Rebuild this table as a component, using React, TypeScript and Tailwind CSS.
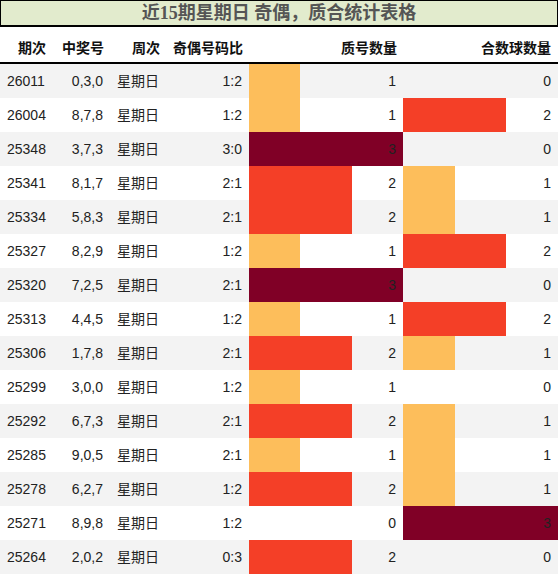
type Row = {
  issue: string;
  nums: string;
  ratio: string;
  prime: number;
  comp: number;
};

const rows: Row[] = [
  { issue: "26011", nums: "0,3,0", ratio: "1:2", prime: 1, comp: 0 },
  { issue: "26004", nums: "8,7,8", ratio: "1:2", prime: 1, comp: 2 },
  { issue: "25348", nums: "3,7,3", ratio: "3:0", prime: 3, comp: 0 },
  { issue: "25341", nums: "8,1,7", ratio: "2:1", prime: 2, comp: 1 },
  { issue: "25334", nums: "5,8,3", ratio: "2:1", prime: 2, comp: 1 },
  { issue: "25327", nums: "8,2,9", ratio: "1:2", prime: 1, comp: 2 },
  { issue: "25320", nums: "7,2,5", ratio: "2:1", prime: 3, comp: 0 },
  { issue: "25313", nums: "4,4,5", ratio: "1:2", prime: 1, comp: 2 },
  { issue: "25306", nums: "1,7,8", ratio: "2:1", prime: 2, comp: 1 },
  { issue: "25299", nums: "3,0,0", ratio: "1:2", prime: 1, comp: 0 },
  { issue: "25292", nums: "6,7,3", ratio: "2:1", prime: 2, comp: 1 },
  { issue: "25285", nums: "9,0,5", ratio: "2:1", prime: 1, comp: 1 },
  { issue: "25278", nums: "6,2,7", ratio: "1:2", prime: 2, comp: 1 },
  { issue: "25271", nums: "8,9,8", ratio: "1:2", prime: 0, comp: 3 },
  { issue: "25264", nums: "2,0,2", ratio: "0:3", prime: 2, comp: 0 },
];

const barColor = ["transparent", "#fdbe5b", "#f43f27", "#800026"];

const cols = "grid grid-cols-[53px_57px_56px_83px_154px_155px]";

function BarCell({ value }: { value: number }) {
  return (
    <div className="relative flex items-center justify-end pr-[7px]">
      {value > 0 && (
        <div
          className="absolute left-0 top-0 bottom-0"
          style={{ width: `${(value / 3) * 100}%`, background: barColor[value] }}
        />
      )}
      <span className="relative">{value}</span>
    </div>
  );
}

export default function App() {
  return (
    <div
      className="w-[558px] h-[575px] overflow-hidden bg-white text-[14px] text-[#222]"
      style={{ fontFamily: '"Liberation Sans", "Noto Sans CJK SC", sans-serif' }}
    >
      <div
        className="h-[27px] border border-b-2 border-black bg-[#e2ebcd] flex items-center justify-center text-[18px] font-bold text-[#555] leading-none"
        style={{ fontFamily: '"Liberation Serif", "Noto Sans CJK SC", serif' }}
      >
        近15期星期日 奇偶，质合统计表格
      </div>

      <div className={`${cols} h-[37px] border-b-2 border-black font-bold text-[#111] pt-2`}>
        <div className="flex items-center justify-end pr-[7px]">期次</div>
        <div className="flex items-center justify-end pr-[6px]">中奖号</div>
        <div className="flex items-center justify-end pr-[6px]">周次</div>
        <div className="flex items-center justify-end pr-[6px]">奇偶号码比</div>
        <div className="flex items-center justify-end pr-[6px]">质号数量</div>
        <div className="flex items-center justify-end pr-[7px]">合数球数量</div>
      </div>

      {rows.map((r, i) => (
        <div
          key={r.issue}
          className={`${cols} h-[34px] ${i % 2 === 0 ? "bg-[#f3f3f3]" : "bg-white"}`}
        >
          <div className="flex items-center pl-[7px]">{r.issue}</div>
          <div className="flex items-center justify-end pr-[7px]">{r.nums}</div>
          <div className="flex items-center pl-[7px]">星期日</div>
          <div className="flex items-center justify-end pr-[7px]">{r.ratio}</div>
          <BarCell value={r.prime} />
          <BarCell value={r.comp} />
        </div>
      ))}
    </div>
  );
}
